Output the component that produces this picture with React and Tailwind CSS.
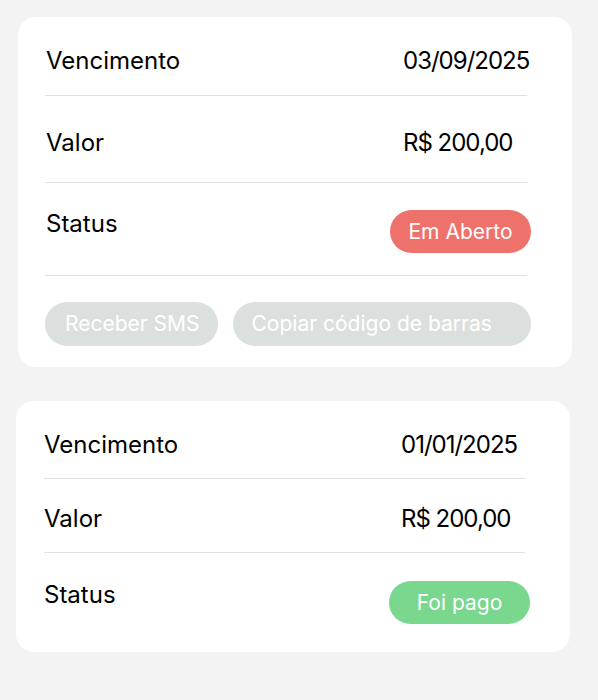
const fonte = { fontFamily: "Inter, 'Noto Sans', sans-serif" };

const boletos = [
  {
    vencimento: "03/09/2025",
    valor: "R$ 200,00",
    status: "aberto",
  },
  {
    vencimento: "01/01/2025",
    valor: "R$ 200,00",
    status: "pago",
  },
];

export default function App() {
  return (
    <div className="min-h-[700px] w-[598px] bg-[#f3f3f3] pt-[17px]" style={fonte}>
      <CardAberto boleto={boletos[0]} />
      <CardPago boleto={boletos[1]} />
    </div>
  );
}

function Divisor({ className = "" }) {
  return <div className={`h-px bg-[#e2e2e2] ${className}`} />;
}

function Linha({ label, valor, className = "", largura }) {
  return (
    <div className={`flex items-start justify-between text-2xl leading-8 text-black ${className}`}>
      <span>{label}</span>
      <span className={`whitespace-nowrap tracking-[-1px] ${largura}`}>{valor}</span>
    </div>
  );
}

function Badge({ cor, children, className = "" }) {
  return (
    <span
      className={`flex h-[43px] w-[141px] items-center justify-center rounded-full text-[21px] text-white ${cor} ${className}`}
    >
      {children}
    </span>
  );
}

function CardAberto({ boleto }) {
  return (
    <div className="ml-[18px] w-[554px] rounded-[18px] bg-white pb-[21px] pl-[28px] pr-[41px] pt-[28px]">
      <Linha label="Vencimento" valor={boleto.vencimento} largura="w-[128px]" />
      <Divisor className="-ml-px mr-[4px] mt-[18px]" />
      <Linha label="Valor" valor={boleto.valor} largura="w-[128px]" className="mt-[31px]" />
      <Divisor className="-ml-px mr-[4px] mt-[23px]" />
      <div className="mt-[25px] flex items-start justify-between">
        <span className="text-2xl leading-8 text-black">Status</span>
        <Badge cor="bg-[#ef716b]" className="mt-[2px]">Em Aberto</Badge>
      </div>
      <Divisor className="-ml-px mr-[4px] mt-[22px]" />
      <div className="-ml-px mt-[26px] flex gap-[15px]">
        <button className="h-[44px] whitespace-nowrap rounded-full bg-[#dbe0de] pl-5 pr-[18px] text-[21px] text-white">
          Receber SMS
        </button>
        <button className="h-[44px] flex-1 whitespace-nowrap rounded-full bg-[#dbe0de] pl-[19px] pr-5 text-left text-[21px] text-white">
          Copiar código de barras
        </button>
      </div>
    </div>
  );
}

function CardPago({ boleto }) {
  return (
    <div className="ml-[16px] mt-[34px] w-[554px] rounded-[18px] bg-white pb-[28px] pl-[28px] pr-[40px] pt-[28px]">
      <Linha label="Vencimento" valor={boleto.vencimento} largura="w-[129px]" />
      <Divisor className="mr-[5px] mt-[17px]" />
      <Linha label="Valor" valor={boleto.valor} largura="w-[129px]" className="mt-[24px]" />
      <Divisor className="mr-[5px] mt-[17px]" />
      <div className="mt-[26px] flex items-start justify-between">
        <span className="text-2xl leading-8 text-black">Status</span>
        <Badge cor="bg-[#79d88e]" className="mt-[2px]">Foi pago</Badge>
      </div>
    </div>
  );
}
